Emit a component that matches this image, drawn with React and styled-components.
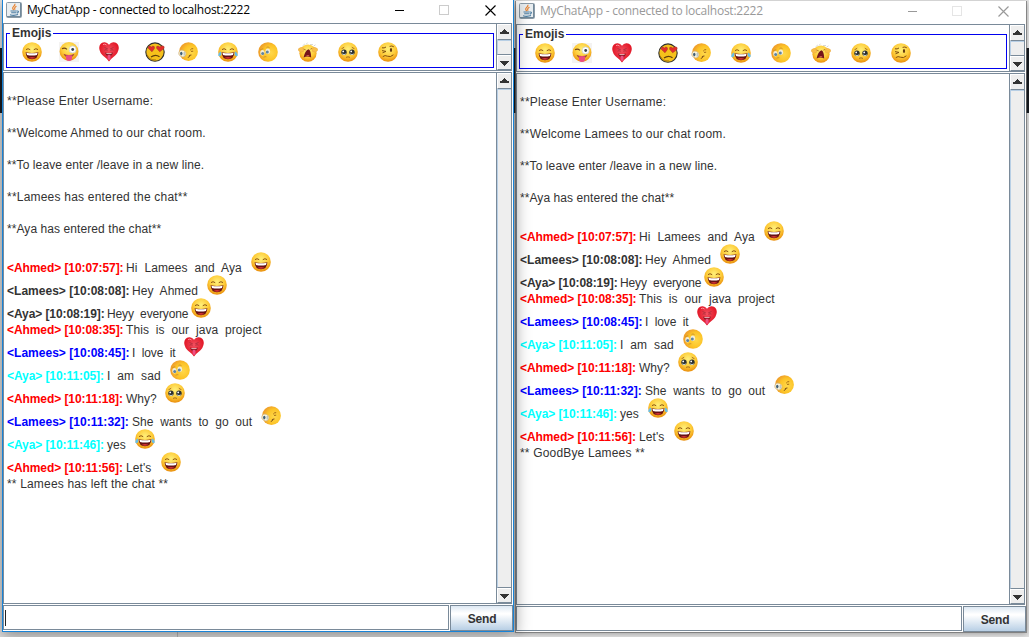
import React from 'react';
import styled, { createGlobalStyle } from 'styled-components';

const LINE = '#7a8a99';

const Global = createGlobalStyle`
  * { box-sizing: border-box; }
  html, body { margin: 0; padding: 0; overflow: hidden; }
  body { font-family: 'Liberation Sans', Arial, sans-serif; font-size: 12px; color: #333; }
`;

const Desktop = styled.div`
  position: relative;
  width: 1029px;
  height: 637px;
  overflow: hidden;
  background: linear-gradient(#e9e9e9 0 48px, #181c22 48px 113px, #e3e3e3 113px);
`;

const DesktopSeam = styled.div`
  position: absolute;
  left: 177px;
  top: 632px;
  width: 1px;
  height: 5px;
  background: #bcbcbc;
`;

const Frame = styled.section`
  position: absolute;
  left: ${p => p.$x}px;
  top: ${p => p.$y}px;
  width: 512px;
  height: 632px;
  z-index: ${p => (p.$active ? 2 : 1)};
  display: flex;
  flex-direction: column;
  background: #fff;
  background-clip: padding-box;
  border: 1px solid ${p => (p.$active ? '#1883d7' : 'rgba(110,110,110,0.72)')};
  border-top: 0;
  box-shadow: ${p => (p.$active ? '0 3px 15px 1px rgba(0,0,0,0.4)' : '0 1px 6px rgba(0,0,0,0.3)')};
`;

const TitleBar = styled.header`
  display: flex;
  align-items: center;
  height: 23px;
  padding: 0 17px 3px 3px;
  color: ${p => (p.$active ? '#000' : '#999')};
`;

const Title = styled.span`
  flex: 1;
  margin-left: 5px;
  font: 12px/20px 'Open Sans', 'Noto Sans', sans-serif;
  letter-spacing: -0.24px;
  white-space: pre;
`;

const Controls = styled.div`
  display: grid;
  grid-template-columns: 10px 10px 11px;
  column-gap: 35px;
  align-items: center;
  height: 20px;
`;

const ScrollPane = styled.div`
  display: flex;
  width: 509px;
  height: ${p => p.$h}px;
  margin-bottom: 1px;
  border: 1px solid ${LINE};
  background: #fff;
`;

const Viewport = styled.div`
  flex: 1;
  min-width: 0;
  padding: ${p => p.$pad};
`;

const Bar = styled.div`
  display: flex;
  flex-direction: column;
  width: 15px;
  border-left: 1px solid ${LINE};
`;

const ArrowButton = styled.div`
  display: flex;
  justify-content: center;
  align-items: flex-start;
  height: ${p => (p.$up ? 16 : 15)}px;
  padding-top: ${p => (p.$up ? 4 : 5)}px;
  background: #eee;
  border-top: 1px solid #fff;
  border-left: 1px solid #fff;
  border-bottom: 1px solid ${LINE};
`;

const Thumb = styled.div`
  flex: 1;
  background: #eee;
  border: solid;
  border-width: 1px 0 1px 1px;
  border-color: #b8cfe5 transparent ${LINE} #b8cfe5;
`;

const EmojiGroup = styled.fieldset`
  display: flex;
  width: 488px;
  height: 41px;
  margin: 0;
  padding: 2px 0 0 15px;
  border: 1px solid #0000f0;
  min-width: 0;
`;

const Legend = styled.legend`
  height: 13px;
  margin-left: -12px;
  padding: 0 2px 0 2px;
  font-weight: bold;
  line-height: 13px;
`;

const EmojiSlot = styled.span`
  height: 20px;
  margin-right: ${p => p.$gap}px;
`;

const Line = styled.div`
  display: flex;
  align-items: flex-end;
  height: ${p => (p.$tall ? 23 : 16)}px;
  line-height: 14px;
  white-space: pre;
`;

const Notice = styled.span`
  letter-spacing: ${p => p.$ls || 0}px;
`;

const Who = styled.span`
  width: ${p => p.$w}px;
  font-weight: bold;
  letter-spacing: ${p => p.$ls}px;
  color: ${p => p.$c};
`;

const Said = styled.span`
  width: ${p => p.$w}px;
  letter-spacing: ${p => p.$ls}px;
`;

const LineEmoji = styled.span`
  height: 23px;
`;

const Footer = styled.footer`
  display: flex;
  gap: 1px;
  height: 26px;
`;

const Input = styled.div`
  width: 446px;
  height: 25px;
  padding: 4px 0 0 1px;
  border: 1px solid ${LINE};
  background: #fff;
`;

const Caret = styled.div`
  width: 1px;
  height: 16px;
  background: #222;
`;

const Send = styled.button`
  width: 63px;
  height: 26px;
  padding: 2px 0 0 1px;
  border: 1px solid ${LINE};
  background: linear-gradient(#dde8f3 0%, #fff 30%, #fff 34%, #b8cfe5 100%);
  color: #333;
  font: bold 12px 'Liberation Sans', Arial, sans-serif;
  letter-spacing: -0.2px;
`;

const Svg = styled.svg`
  display: block;
  flex: none;
`;

const HiddenSvg = styled.svg`
  position: absolute;
`;

const Defs = () => (
  <HiddenSvg width="0" height="0">
    <defs>
      <radialGradient id="face" cx="0.5" cy="0.35" r="0.65">
        <stop offset="0" stopColor="#fff07a" />
        <stop offset="0.6" stopColor="#fdca37" />
        <stop offset="1" stopColor="#e98d0c" />
      </radialGradient>
      <radialGradient id="side" cx="0.65" cy="0.55" r="0.6">
        <stop offset="0" stopColor="#ffd84a" />
        <stop offset="0.65" stopColor="#fcc327" />
        <stop offset="1" stopColor="#f0a02a" />
      </radialGradient>
      <radialGradient id="love" cx="0.5" cy="0.4" r="0.6">
        <stop offset="0" stopColor="#f25060" />
        <stop offset="1" stopColor="#df0c1b" />
      </radialGradient>
    </defs>
  </HiddenSvg>
);

const disc = <circle cx="10" cy="10" r="9.8" fill="url(#face)" />;

const grin = (
  <>
    {disc}
    <path d="M4 7.6Q6 5.8 8.2 7.7M11.8 7.7Q14 5.8 16 7.6" fill="none" stroke="#8a5312" strokeWidth="1" />
    <path d="M3.6 10.2Q10 11.6 16.4 10.2Q16 17.2 10 17.2Q4 17.2 3.6 10.2Z" fill="#681112" />
    <path d="M4.4 10.7Q10 11.9 15.6 10.7L15 12.9Q10 13.9 5 12.9Z" fill="#fff" />
    <path d="M6.6 15.8Q10 14 13.4 15.8Q10 17.6 6.6 15.8Z" fill="#d33235" />
  </>
);

const ART = {
  grin,
  wink: (
    <>
      <path d="M0 0H20V20H0Z" fill="#f4f3f2" />
      <circle cx="10" cy="9.4" r="9.4" fill="url(#face)" />
      <path d="M3 6.8Q5.5 5.3 8 7.4" fill="none" stroke="#754715" strokeWidth="1.2" />
      <circle cx="13.6" cy="7.4" r="3.5" fill="#fff" stroke="#c5ccd0" strokeWidth="0.7" />
      <circle cx="13.7" cy="7.5" r="1.4" fill="#35424e" />
      <path d="M4.5 11.8Q10 14.2 15.5 11.8Q14.4 15.4 10 15.4Q5.6 15.4 4.5 11.8Z" fill="#a8453b" />
      <path d="M7 13.5Q10 12.3 13 13.5V16.5Q12.8 19 10 19Q7.2 19 7 16.5Z" fill="#eb4d83" />
    </>
  ),
  heart: (
    <>
      <path d="M10 2.8Q11.8 0 14.8 .3Q19.7 .8 19.8 6Q19.5 11 15 14.5Q12 16.7 10 19.4Q8 16.7 5 14.5Q.5 11 .2 6Q.3 .8 5.2 .3Q8.2 0 10 2.8Z" fill="url(#love)" />
      <path d="M5.5 5.5L8.8 6.9M14.5 5.5L11.2 6.9M5.5 8.2Q7 7 8.5 8.4M11.5 8.4Q13 7 14.5 8.2" fill="none" stroke="#a52c38" strokeWidth="0.8" />
      <path d="M6.2 10.5Q10 12 13.8 10.5Q13.2 14.2 10 14.5Q6.8 14.2 6.2 10.5Z" fill="#861822" />
      <path d="M7.2 11H12.8L12.4 12.1H7.6Z" fill="#dfa4aa" />
      <path d="M8.6 12.8H11.5V17L10 18.2L8.6 16.8Z" fill="#ee4f83" />
      <path d="M4 2.6Q5.8 1.5 7.5 3" fill="none" stroke="#ff8c95" strokeWidth="1" />
    </>
  ),
  lovesad: (
    <>
      <circle cx="10" cy="10.1" r="9.2" fill="#f6c11b" stroke="#30302c" strokeWidth="1.1" />
      <path d="M7 9.8L3.2 6.2Q2.7 3.7 5 4.1L6.3 5L7.8 4Q10 4 9.4 6.5ZM14.7 9.8L11.6 6.2Q11 4 13.1 4.1L14.8 5L17 3.8Q20 3.8 19 6.5Z" fill="#e42c2b" stroke="#9a3826" strokeWidth="0.5" />
      <path d="M6 15Q10.5 11.8 14.5 14.8" fill="none" stroke="#60400d" strokeWidth="1.2" />
      <path d="M2 12.5Q4 18.2 11 18" fill="none" stroke="#b17d0b" strokeWidth="1" />
    </>
  ),
  peek: (
    <>
      <circle cx="10.5" cy="9.7" r="9.4" fill="url(#side)" />
      <ellipse cx="4.4" cy="11.5" rx="3.7" ry="3.2" fill="#f8f5df" stroke="#cfb076" strokeWidth="0.7" transform="rotate(24 4.4 11.5)" />
      <ellipse cx="3.3" cy="11.6" rx="1.2" ry="1.8" fill="#415f76" />
      <path d="M6.2 10V13.6" stroke="#8ba0a8" strokeWidth="0.8" />
      <path d="M12.2 8.2Q13.5 6.2 15.2 6.7M13 9.4L15.2 9.2" fill="none" stroke="#a36818" strokeWidth="1" />
      <path d="M11 14.5Q11.6 12.8 13.4 13" fill="none" stroke="#754817" strokeWidth="1.1" />
      <path d="M10 15.8L11.4 14.3" stroke="#754817" />
    </>
  ),
  joy: (
    <>
      {grin}
      <path d="M2.8 9.5Q-.2 11 .3 13.6Q1.2 15 2.8 13.6Q4 12 2.8 9.5ZM17.2 9.5Q20.2 11 19.7 13.6Q18.8 15 17.2 13.6Q16 12 17.2 9.5Z" fill="#69bee6" />
    </>
  ),
  sad: (
    <>
      <circle cx="10" cy="10" r="9.8" fill="url(#side)" />
      <ellipse cx="4.4" cy="10.8" rx="2.1" ry="2.7" fill="#f2ecd8" />
      <ellipse cx="9.8" cy="9.2" rx="2.3" ry="2.7" fill="#f2ecd8" />
      <circle cx="4.7" cy="11.5" r="1.5" fill="#5f84a0" />
      <circle cx="9.3" cy="9.9" r="1.5" fill="#5f84a0" />
      <path d="M2.2 7.8L5.2 6.6M8.5 5.4Q10 4.4 11.5 5.6M5.6 15.3Q7 14.4 8.4 14.8" fill="none" stroke="#c58a2c" strokeWidth="0.8" />
    </>
  ),
  scream: (
    <>
      <circle cx="10" cy="11.2" r="8.6" fill="url(#face)" />
      <path d="M.2 7Q3 4 6 6.5L5.4 9.5Q2 11 .4 8.6ZM19.8 7Q17 4 14 6.5L14.6 9.5Q18 11 19.6 8.6Z" fill="#f9bf48" stroke="#e5a040" strokeWidth="0.4" />
      <path d="M4.5 4L6.8 2M8 2.6L9.5 .7M12 2.5H15M15.5 4.2L17.5 2.8" stroke="#d4d5cf" strokeWidth="0.9" />
      <path d="M5.6 15.4Q7 8.4 10.4 7.2Q13 8 13.2 15.6Q9.6 13.6 5.6 15.4Z" fill="#75151a" />
      <path d="M8 14.1Q10 12 11.6 14.1Q10 13.4 8 14.1Z" fill="#ee6b68" />
      <path d="M5.8 7.4L7.8 7.9M12.4 7.2L14 6.4" stroke="#a8702a" strokeWidth="0.8" />
    </>
  ),
  plead: (
    <>
      {disc}
      <circle cx="6" cy="10.2" r="2.7" fill="#2c3030" />
      <circle cx="14" cy="10.2" r="2.7" fill="#2c3030" />
      <circle cx="5.2" cy="9.4" r="0.9" fill="#fff" />
      <circle cx="13.2" cy="9.4" r="0.9" fill="#fff" />
      <path d="M4.2 11.9Q6 13.4 7.8 11.9M12.2 11.9Q14 13.4 15.8 11.9" fill="none" stroke="#d8e6e9" strokeWidth="0.9" />
      <path d="M3.6 6.6Q5 6.2 6.2 5.2M16.4 6.6Q15 6.2 13.8 5.2M8 15.4Q10 14.2 12 15.4" fill="none" stroke="#9b6218" strokeWidth="0.9" />
    </>
  ),
  woozy: (
    <>
      {disc}
      <path d="M4 5.8Q6.2 6.4 8 5M4 8.6L8 9.4L4.5 10.8" fill="none" stroke="#81500f" strokeWidth="1" />
      <ellipse cx="13" cy="8" rx="1.1" ry="1.9" fill="#653c12" />
      <path d="M11.6 4.4Q14 3.4 15.8 4.8M4.8 14.6Q7 12.8 9.4 14.2Q12.5 15.6 15.4 12.8" fill="none" stroke="#85500f" strokeWidth="1" />
    </>
  ),
};

const Emoji = ({ k }) => (
  <Svg width="20" height="20" viewBox="0 0 20 20">{ART[k]}</Svg>
);

const JavaIcon = () => (
  <Svg width="16" height="16" viewBox="0 0 16 16">
    <rect x="0.5" y="0.5" width="15" height="15" rx="1" fill="#e9eef1" stroke="#8b9ba7" />
    <path d="M1 14.5H15M14.5 1V15" stroke="#72899b" />
    <path d="M8.8 1.8Q9.6 3.2 7.5 4.6Q5.8 6 7.7 8M10.5 4.2Q7.8 5.4 9 7.8" fill="none" stroke="#e9822e" strokeWidth="1.2" />
    <path d="M4.5 9H10.8M5.2 10.8H10.3M4 12.8Q8 14 12 12.6M11 9Q13.3 8.8 12 10.5L10.8 11.2" fill="none" stroke="#4c7da2" strokeWidth="1.1" />
  </Svg>
);

const WindowControls = ({ active }) => {
  const ink = active ? '#000' : '#999';
  return (
    <Controls>
      <Svg width="10" height="11"><path d="M-1 5.5H9" stroke={ink} /></Svg>
      <Svg width="10" height="11" overflow="visible"><rect x="-0.5" y="0.5" width="9" height="9" fill="none" stroke={active ? '#ccc' : '#e5e5e5'} /></Svg>
      <Svg width="11" height="11"><path d="M.5 .5L10.5 10.5M10.5 .5L.5 10.5" stroke={ink} strokeWidth="1.15" /></Svg>
    </Controls>
  );
};

const Arrow = ({ up }) => (
  <Svg width="9" height="5" viewBox="0 0 9 5" shapeRendering="crispEdges">
    <path d={up ? 'M4 0H5V1H6V2H7V3H9V5H0V3H2V2H3V1H4Z' : 'M0 0H9V1H8V2H7V3H6V4H5V5H4V4H3V3H2V2H1V1H0Z'} fill="#333" />
  </Svg>
);

const ScrollBar = () => (
  <Bar>
    <ArrowButton $up><Arrow up /></ArrowButton>
    <Thumb />
    <ArrowButton><Arrow /></ArrowButton>
  </Bar>
);

const PALETTE = [
  ['grin', 17], ['wink', 20], ['heart', 26], ['lovesad', 13], ['peek', 20],
  ['joy', 20], ['sad', 20], ['scream', 20], ['plead', 20], ['woozy', 0],
];

const USERS = {
  Ahmed: { w: 119, ls: -0.08 },
  Lamees: { w: 125, ls: 0.02 },
  Aya: { w: 100, ls: -0.08 },
};

const CHAT = [
  ['Ahmed', '10:07:57', '#f00', 'Hi  Lamees  and  Aya', 125, 'grin', 0.1],
  ['Lamees', '10:08:08', '#333', 'Hey  Ahmed', 75, 'grin', 0.05],
  ['Aya', '10:08:19', '#333', 'Heyy  everyone', 84, 'grin', -0.15],
  ['Ahmed', '10:08:35', '#f00', 'This  is  our  java  project', 140, null, 0.08],
  ['Lamees', '10:08:45', '#00f', 'I  love  it', 52, 'heart', -0.1],
  ['Aya', '10:11:05', '#0ff', 'I  am  sad', 63, 'sad', 0.1],
  ['Ahmed', '10:11:18', '#f00', 'Why?', 39, 'plead', 0],
  ['Lamees', '10:11:32', '#00f', 'She  wants  to  go  out', 129, 'peek', 0.03],
  ['Aya', '10:11:46', '#0ff', 'yes', 28, 'joy', 0],
  ['Ahmed', '10:11:56', '#f00', "Let's", 35, 'grin', 0.1],
];

const ChatWindow = ({ x, y, active, notices, ending }) => (
  <Frame $x={x} $y={y} $active={active}>
    <TitleBar $active={active}>
      <JavaIcon />
      <Title>MyChatApp - connected to localhost:2222</Title>
      <WindowControls active={active} />
    </TitleBar>
    <ScrollPane $h={48}>
      <Viewport $pad="3px 0 0 2px">
        <EmojiGroup>
          <Legend>Emojis</Legend>
          {PALETTE.map(([k, gap]) => <EmojiSlot key={k} $gap={gap}><Emoji k={k} /></EmojiSlot>)}
        </EmojiGroup>
      </Viewport>
      <ScrollBar />
    </ScrollPane>
    <ScrollPane $h={532}>
      <Viewport $pad="3px 0 0 3px">
        {notices.map(([text, ls]) => (
          <React.Fragment key={text}>
            <Line />
            <Line><Notice $ls={ls}>{text}</Notice></Line>
          </React.Fragment>
        ))}
        <Line />
        {CHAT.map(([who, time, color, text, w, emoji, ls]) => (
          <Line key={time} $tall={!!emoji}>
            <Who $w={USERS[who].w} $ls={USERS[who].ls} $c={color}>{`<${who}> [${time}]:`}</Who>
            <Said $w={w} $ls={ls}>{text}</Said>
            {emoji && <LineEmoji><Emoji k={emoji} /></LineEmoji>}
          </Line>
        ))}
        <Line><Notice $ls={0.17}>{ending}</Notice></Line>
      </Viewport>
      <ScrollBar />
    </ScrollPane>
    <Footer>
      <Input>{active && <Caret />}</Input>
      <Send>Send</Send>
    </Footer>
  </Frame>
);

export default function App() {
  return (
    <Desktop>
      <Global />
      <Defs />
      <DesktopSeam />
      <ChatWindow
        x={2}
        y={0}
        active
        notices={[
          ['**Please Enter Username:', 0.26],
          ['**Welcome Ahmed to our chat room.', 0.15],
          ['**To leave enter /leave in a new line.', 0.1],
          ['**Lamees has entered the chat**', 0.21],
          ['**Aya has entered the chat**', 0.08],
        ]}
        ending="** Lamees has left the chat **"
      />
      <ChatWindow
        x={515}
        y={1}
        notices={[
          ['**Please Enter Username:', 0.26],
          ['**Welcome Lamees to our chat room.', 0.2],
          ['**To leave enter /leave in a new line.', 0.1],
          ['**Aya has entered the chat**', 0.08],
        ]}
        ending="** GoodBye Lamees **"
      />
    </Desktop>
  );
}
